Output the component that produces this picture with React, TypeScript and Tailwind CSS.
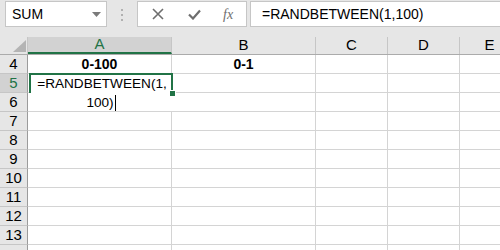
import React from 'react';

const cols = [
  { name: 'A', w: 'w-[144px]' },
  { name: 'B', w: 'w-[144px]' },
  { name: 'C', w: 'w-[72px]' },
  { name: 'D', w: 'w-[72px]' },
  { name: 'E', w: 'w-[60px]' },
];

const rows = [4, 5, 6, 7, 8, 9, 10, 11, 12, 13, 14];

const cellText: Record<string, string> = {
  A4: '0-100',
  B4: '0-1',
};

const App: React.FC = () => {
  return (
    <div className="relative w-[500px] h-[250px] overflow-hidden bg-[#e6e6e6] font-['Liberation_Sans',Arial,sans-serif] text-[14px] text-black">
      {/* formula bar */}
      <div className="flex h-[37px] items-start pt-[1px]">
        <div className="ml-[5px] flex h-[26px] w-[102px] items-center justify-between border border-[#c6c6c6] bg-white pl-[6px] pr-[5px]">
          <span>SUM</span>
          <svg width="9" height="5" viewBox="0 0 9 5">
            <path d="M0 0h9L4.5 5z" fill="#7a7a7a" />
          </svg>
        </div>
        <div className="flex w-[30px] flex-col items-center gap-[3px] pt-[8px]">
          <span className="h-[2px] w-[2px] bg-[#b0b0b0]" />
          <span className="h-[2px] w-[2px] bg-[#b0b0b0]" />
          <span className="h-[2px] w-[2px] bg-[#b0b0b0]" />
        </div>
        <div className="flex h-[26px] w-[110px] items-center border border-[#c6c6c6] bg-white">
          <svg className="ml-[14px]" width="12" height="12" viewBox="0 0 12 12">
            <path d="M1 1l10 10M11 1L1 11" stroke="#6e6e6e" strokeWidth="1.6" />
          </svg>
          <svg className="ml-[24px]" width="13" height="11" viewBox="0 0 13 11">
            <path d="M1 5.5l4 4L12 1.5" stroke="#6e6e6e" strokeWidth="2.2" fill="none" />
          </svg>
          <span className="ml-[22px] font-['Liberation_Serif',serif] text-[14px] italic text-[#6e6e6e]">fx</span>
        </div>
        <div className="ml-[3px] flex h-[26px] flex-1 items-center border-y border-l border-[#c6c6c6] bg-white pl-[11px]">
          =RANDBETWEEN(1,100)
        </div>
      </div>

      {/* column headers */}
      <div className="flex h-[18px] border-b border-[#ababab] text-[15px]">
        <div className="flex w-[28px] shrink-0 items-end justify-end border-r border-[#c6c6c6] pb-[2px] pr-[1px]">
          <svg width="13" height="12" viewBox="0 0 13 12">
            <path d="M13 0V12H0z" fill="#b4b4b4" />
          </svg>
        </div>
        {cols.map((c) => (
          <div
            key={c.name}
            className={`flex shrink-0 items-center justify-center border-r border-[#c6c6c6] ${c.w} ${
              c.name === 'A' ? 'border-b-2 border-b-[#217346] bg-[#d2d2d2] text-[#217346]' : ''
            }`}
          >
            {c.name}
          </div>
        ))}
      </div>

      {/* rows */}
      {rows.map((r) => (
        <div key={r} className="flex h-[19px]">
          <div
            className={`flex w-[28px] shrink-0 items-center justify-center border-b border-r border-b-[#c6c6c6] border-r-[#9b9b9b] text-[15px] ${
              r === 5 ? 'bg-[#d2d2d2] text-[#217346]' : ''
            }`}
          >
            {r < 14 ? r : ''}
          </div>
          {cols.map((c) => (
            <div
              key={c.name}
              className={`flex shrink-0 items-center justify-center border-b border-r border-[#d4d4d4] bg-white font-bold ${c.w}`}
            >
              {cellText[`${c.name}${r}`] ?? ''}
            </div>
          ))}
        </div>
      ))}

      {/* in-cell editor on A5 */}
      <div className="absolute left-[29px] top-[73px] h-[38px] w-[144px] bg-white">
        <div className="h-[20px] border-2 border-b-0 border-[#217346]" />
        <div className="absolute inset-x-0 top-[1px] flex flex-col items-center whitespace-nowrap text-[13.6px] leading-[19px]">
          <span className="pl-[2px]">=RANDBETWEEN(1,</span>
          <span className="flex items-center">
            100)
            <span className="ml-[1px] inline-block h-[16px] w-[1px] bg-black" />
          </span>
        </div>
        <div className="absolute left-[141px] top-[18px] h-[5px] w-[5px] bg-[#217346] outline outline-1 outline-white" />
      </div>
    </div>
  );
};

export default App;
